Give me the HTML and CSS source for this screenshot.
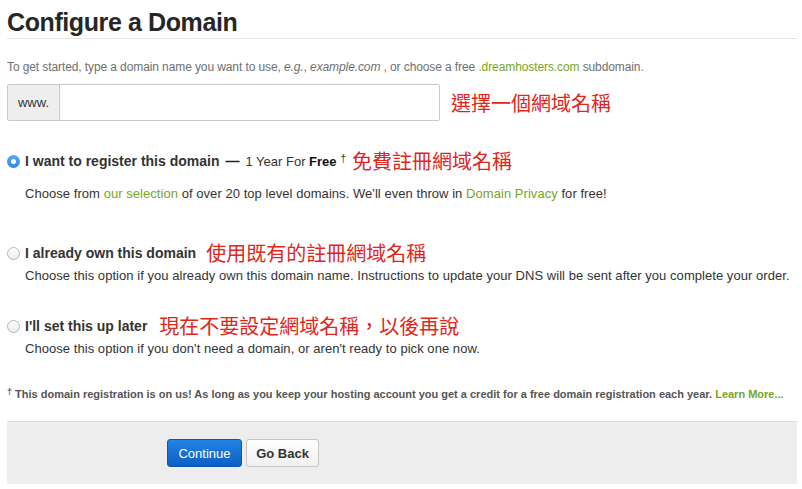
FILE: index.html
```html
<!DOCTYPE html>
<html>
<head>
<meta charset="utf-8">
<link rel="stylesheet" href="styles.css">
</head>
<body>
<div class="page">
  <h1 class="title">Configure a Domain</h1>
  <p class="intro">To get started, type a domain name you want to use, <em>e.g.</em>, <em>example.com</em> , or choose a free <a class="link">.dreamhosters.com</a> subdomain.</p>

  <div class="input-row">
    <div class="input-group">
      <span class="addon">www.</span>
      <span class="field"></span>
    </div>
    <span class="note note-input">選擇一個網域名稱</span>
  </div>

  <div class="option option-1">
    <div class="option-label">
      <span class="radio radio-on"></span>
      <span class="label-strong">I want to register this domain</span>
      <span class="dash">—</span>
      <span class="label-extra">1 Year For <b>Free</b><sup class="dagger">†</sup></span>
      <span class="note note-1">免費註冊網域名稱</span>
    </div>
    <p class="desc desc-1">Choose from <a class="link">our selection</a> of over 20 top level domains. We'll even throw in <a class="link">Domain Privacy</a> for free!</p>
  </div>

  <div class="option option-2">
    <div class="option-label">
      <span class="radio"></span>
      <span class="label-strong">I already own this domain</span>
      <span class="note note-2">使用既有的註冊網域名稱</span>
    </div>
    <p class="desc">Choose this option if you already own this domain name. Instructions to update your DNS will be sent after you complete your order.</p>
  </div>

  <div class="option option-3">
    <div class="option-label">
      <span class="radio"></span>
      <span class="label-strong">I'll set this up later</span>
      <span class="note note-3">現在不要設定網域名稱，以後再說</span>
    </div>
    <p class="desc">Choose this option if you don't need a domain, or aren't ready to pick one now.</p>
  </div>

  <p class="footnote"><sup class="fn-dagger">†</sup> This domain registration is on us! As long as you keep your hosting account you get a credit for a free domain registration each year. <a class="link">Learn More...</a></p>

  <div class="actions">
    <button class="btn btn-primary">Continue</button>
    <button class="btn btn-default">Go Back</button>
  </div>
</div>
</body>
</html>
```

FILE: styles.css
```css
html, body {
  margin: 0;
  padding: 0;
  background: #fff;
}
body {
  font-family: "Liberation Sans", Arial, "Noto Sans CJK TC", sans-serif;
  color: #333;
}
.page {
  padding: 0 5px 0 7px;
}
.title {
  margin: 7px 0 0;
  font-size: 25px;
  letter-spacing: -0.4px;
  line-height: 30px;
  font-weight: bold;
  color: #262626;
  padding-bottom: 1px;
  border-bottom: 1px solid #e6e6e6;
}
.intro {
  margin: 20px 0 0;
  font-size: 12px;
  letter-spacing: -0.1px;
  line-height: 16px;
  color: #707070;
}
.link {
  color: #79a51f;
  text-decoration: none;
}
.input-row {
  margin-top: 9px;
  display: flex;
  align-items: center;
}
.input-group {
  display: flex;
  width: 433px;
  height: 37px;
  box-sizing: border-box;
  border: 1px solid #c8c8c8;
  border-radius: 2px;
}
.addon {
  width: 52px;
  box-sizing: border-box;
  background: #eee;
  border-right: 1px solid #c8c8c8;
  font-size: 13px;
  color: #333;
  display: flex;
  align-items: center;
  justify-content: center;
}
.field {
  flex: 1;
  background: #fff;
}
.note {
  font-family: "Noto Sans CJK TC", sans-serif;
  color: #e1261c;
  font-size: 20px;
  line-height: 24px;
}
.note-input {
  margin-left: 11px;
}
.option-label {
  display: flex;
  align-items: center;
  height: 20px;
  font-size: 14px;
}
.option-1 { margin-top: 30px; }
.option-2 { margin-top: 40px; }
.option-3 { margin-top: 31px; }
.radio {
  width: 13px;
  height: 13px;
  box-sizing: border-box;
  border-radius: 50%;
  border: 1px solid #b5b5b5;
  background: linear-gradient(#fff, #ececec);
  margin-right: 5px;
  flex: none;
  position: relative;
}
.radio-on {
  border: none;
  background: linear-gradient(#5aa7f7, #2f86ee);
}
.radio-on::after {
  content: "";
  position: absolute;
  left: 4px;
  top: 4px;
  width: 5px;
  height: 5px;
  border-radius: 50%;
  background: #fff;
}
.label-strong {
  font-weight: bold;
  color: #333;
}
.dash {
  font-weight: bold;
  margin-left: 6px;
  color: #222;
}
.label-extra {
  margin-left: 6px;
  font-size: 13px;
  color: #333;
}
.label-extra b {
  color: #111;
}
.dagger {
  font-size: 10px;
  margin-left: 4px;
  vertical-align: 4px;
  line-height: 0;
}
.note-1 { margin-left: 6px; }
.note-2 { margin-left: 10px; }
.note-3 { margin-left: 12px; }
.desc {
  margin: 4px 0 0 18px;
  font-size: 13px;
  letter-spacing: 0.05px;
  line-height: 18px;
  color: #333;
}
.desc-1 {
  margin-top: 14px;
}
.footnote {
  margin: 28px 0 0;
  font-size: 11px;
  line-height: 16px;
  font-weight: bold;
  color: #555;
}
.fn-dagger {
  font-size: 9px;
  vertical-align: 3px;
  line-height: 0;
}
.actions {
  margin-top: 19px;
  height: 63px;
  box-sizing: border-box;
  border-top: 1px solid #dcdcdc;
  background: #ededed;
  padding: 17px 0 0 160px;
  display: flex;
  align-items: flex-start;
  gap: 4px;
}
.btn {
  height: 28px;
  border-radius: 3px;
  font-family: "Liberation Sans", Arial, sans-serif;
  font-size: 13px;
  padding: 0;
  cursor: pointer;
}
.btn-primary {
  width: 75px;
  color: #fff;
  border: 1px solid #0b58b4;
  background: linear-gradient(#2184e2, #0b5fc6);
}
.btn-default {
  width: 73px;
  font-weight: bold;
  color: #333;
  border: 1px solid #c6c6c6;
  background: linear-gradient(#fff, #f0f0f0);
}
```
